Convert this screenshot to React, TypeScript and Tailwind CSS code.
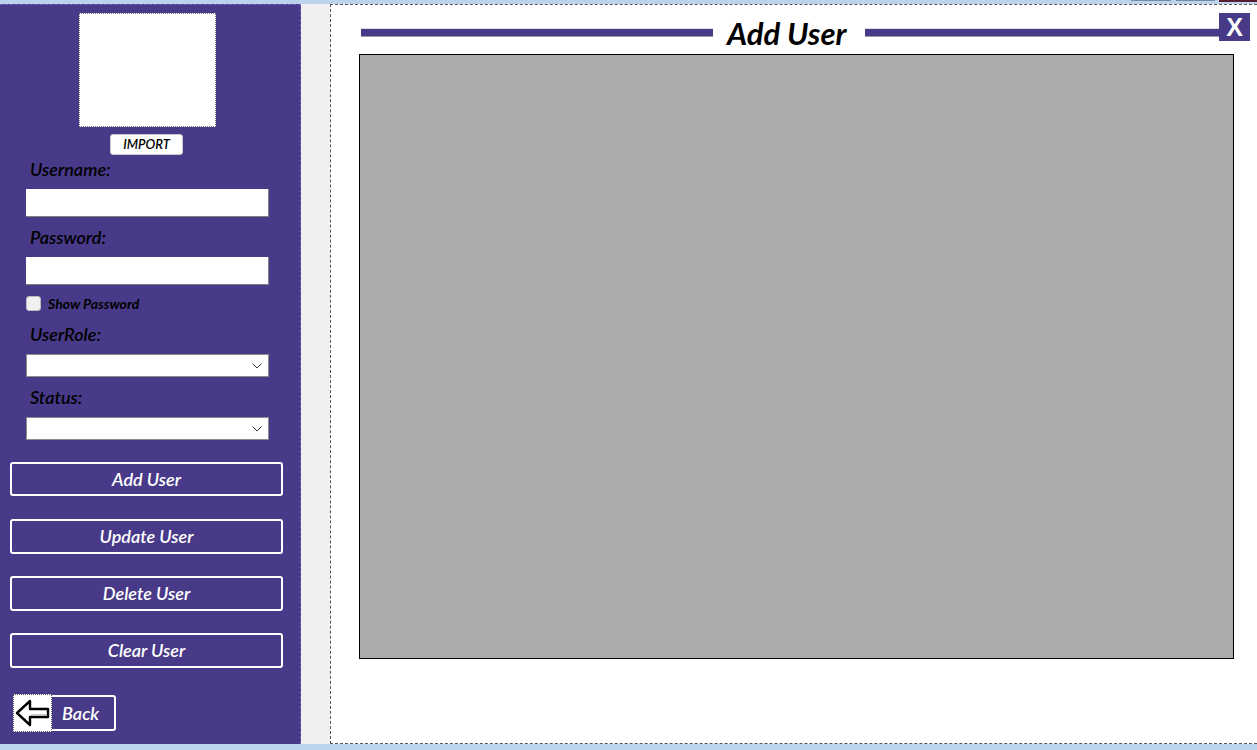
const font = { fontFamily: "Lato, 'Open Sans', 'Liberation Sans', sans-serif" };

function Label({ text, className = "" }: { text: string; className?: string }) {
  return (
    <div className={`ml-[30px] h-[20px] text-[18px] leading-[20px] font-semibold italic text-black ${className}`}>
      {text}
    </div>
  );
}

function Select({ className = "" }: { className?: string }) {
  return (
    <div
      className={`ml-[26px] w-[243px] h-[23px] bg-white border border-[#8c8c8c] flex items-center justify-end pr-[6px] ${className}`}
    >
      <svg width="10" height="6" viewBox="0 0 10 6">
        <path d="M0.5 0.5 L5 5 L9.5 0.5" fill="none" stroke="#333" strokeWidth="1" />
      </svg>
    </div>
  );
}

function SideButton({ label, className = "" }: { label: string; className?: string }) {
  return (
    <button
      type="button"
      className={`ml-[10px] w-[273px] h-[34px] rounded-[3px] border-2 border-white text-white text-[18px] font-semibold italic flex items-center justify-center ${className}`}
    >
      {label}
    </button>
  );
}

export default function App() {
  return (
    <div className="w-[1257px] h-[750px] flex flex-col overflow-hidden bg-[#bcd3ec]" style={font}>
      {/* top strip */}
      <div className="h-[4px] flex justify-end items-start">
        <div className="w-[40px] h-[1px] bg-[#7b8aa3] mr-[5px]" />
        <div className="w-[39px] h-[1px] bg-[#7b8aa3] mr-[4px]" />
        <div className="w-[38px] h-[2px] bg-[#5a1f2e]" />
      </div>

      <div className="h-[740px] flex">
        {/* sidebar */}
        <div className="w-[301px] bg-[#483a88] border-t border-r border-dashed border-[#6d5fc4] flex flex-col">
          <div className="ml-[79px] mt-[8px] w-[137px] h-[114px] bg-white border border-dotted border-[#777]" />
          <button
            type="button"
            className="ml-[110px] mt-[7px] w-[73px] h-[21px] bg-white rounded-[3px] border border-[#c8c8c8] text-[13px] italic font-semibold text-black flex items-center justify-center"
          >
            IMPORT
          </button>

          <Label text="Username:" className="mt-[4px]" />
          <div className="ml-[26px] mt-[10px] w-[243px] h-[28px] bg-white border-b border-r border-[#808080]" />

          <Label text="Password:" className="mt-[10px]" />
          <div className="ml-[26px] mt-[10px] w-[243px] h-[28px] bg-white border-b border-r border-[#808080]" />

          <div className="ml-[26px] mt-[11px] flex items-center gap-[7px]">
            <div className="w-[15px] h-[15px] rounded-[3px] bg-[#f0f0f0] border border-[#bdbdbd]" />
            <span className="text-[14px] font-bold italic text-black leading-[15px]">Show Password</span>
          </div>

          <Label text="UserRole:" className="mt-[13px]" />
          <Select className="mt-[10px]" />

          <Label text="Status:" className="mt-[10px]" />
          <Select className="mt-[10px]" />

          <SideButton label="Add User" className="mt-[22px]" />
          <SideButton label="Update User" className="mt-[23px] h-[35px]" />
          <SideButton label="Delete User" className="mt-[22px] h-[35px]" />
          <SideButton label="Clear User" className="mt-[22px] h-[35px]" />

          <div className="ml-[13px] mt-[27px] w-[103px] h-[36px] rounded-[3px] border-2 border-white flex items-center relative">
            <div className="absolute -left-[2px] -top-[3px] w-[39px] h-[38px] bg-white border border-dotted border-[#555] flex items-center justify-center">
              <svg width="36" height="28" viewBox="0 0 36 28">
                <path
                  d="M2 14 L15 2 L15 10 L33 10 L33 18 L15 18 L15 26 Z"
                  fill="white"
                  stroke="black"
                  strokeWidth="2.4"
                  strokeLinejoin="round"
                />
                <path d="M16 16 L32 16" stroke="#bbb" strokeWidth="1.5" />
              </svg>
            </div>
            <span className="ml-[47px] text-white text-[18px] font-semibold italic">Back</span>
          </div>
        </div>

        {/* gap */}
        <div className="w-[29px] bg-[#f0f0f0]" />

        {/* content */}
        <div className="flex-1 bg-white border-l border-t border-b border-dashed border-[#555] flex flex-col">
          <div className="pl-[30px] pr-[7px] pt-[8px]">
            <div className="h-[28px] flex items-start">
              <div className="mt-[15px] w-[352px] h-[9px] bg-[#483a88] border-t border-t-[#dcdcdc] border-b border-b-[#9a9a9a]" />
              <div className="ml-[14px] mr-[18px] text-[31px] leading-[34px] font-bold italic text-black mt-[3px] whitespace-nowrap">
                Add User
              </div>
              <div className="flex-1 mt-[15px] h-[9px] bg-[#483a88] border-t border-t-[#dcdcdc] border-b border-b-[#9a9a9a]" />
              <div
                className="w-[31px] h-[28px] bg-[#483a88] text-white text-[25px] font-bold leading-[28px] flex items-center justify-center"
                style={{ fontFamily: "'Liberation Sans', Arial, sans-serif" }}
              >
                X
              </div>
            </div>
          </div>
          <div className="ml-[28px] mt-[13px] w-[875px] h-[605px] bg-[#ababab] border border-black" />
        </div>
      </div>

      <div className="flex-1 bg-[#bcd3ec]" />
    </div>
  );
}
